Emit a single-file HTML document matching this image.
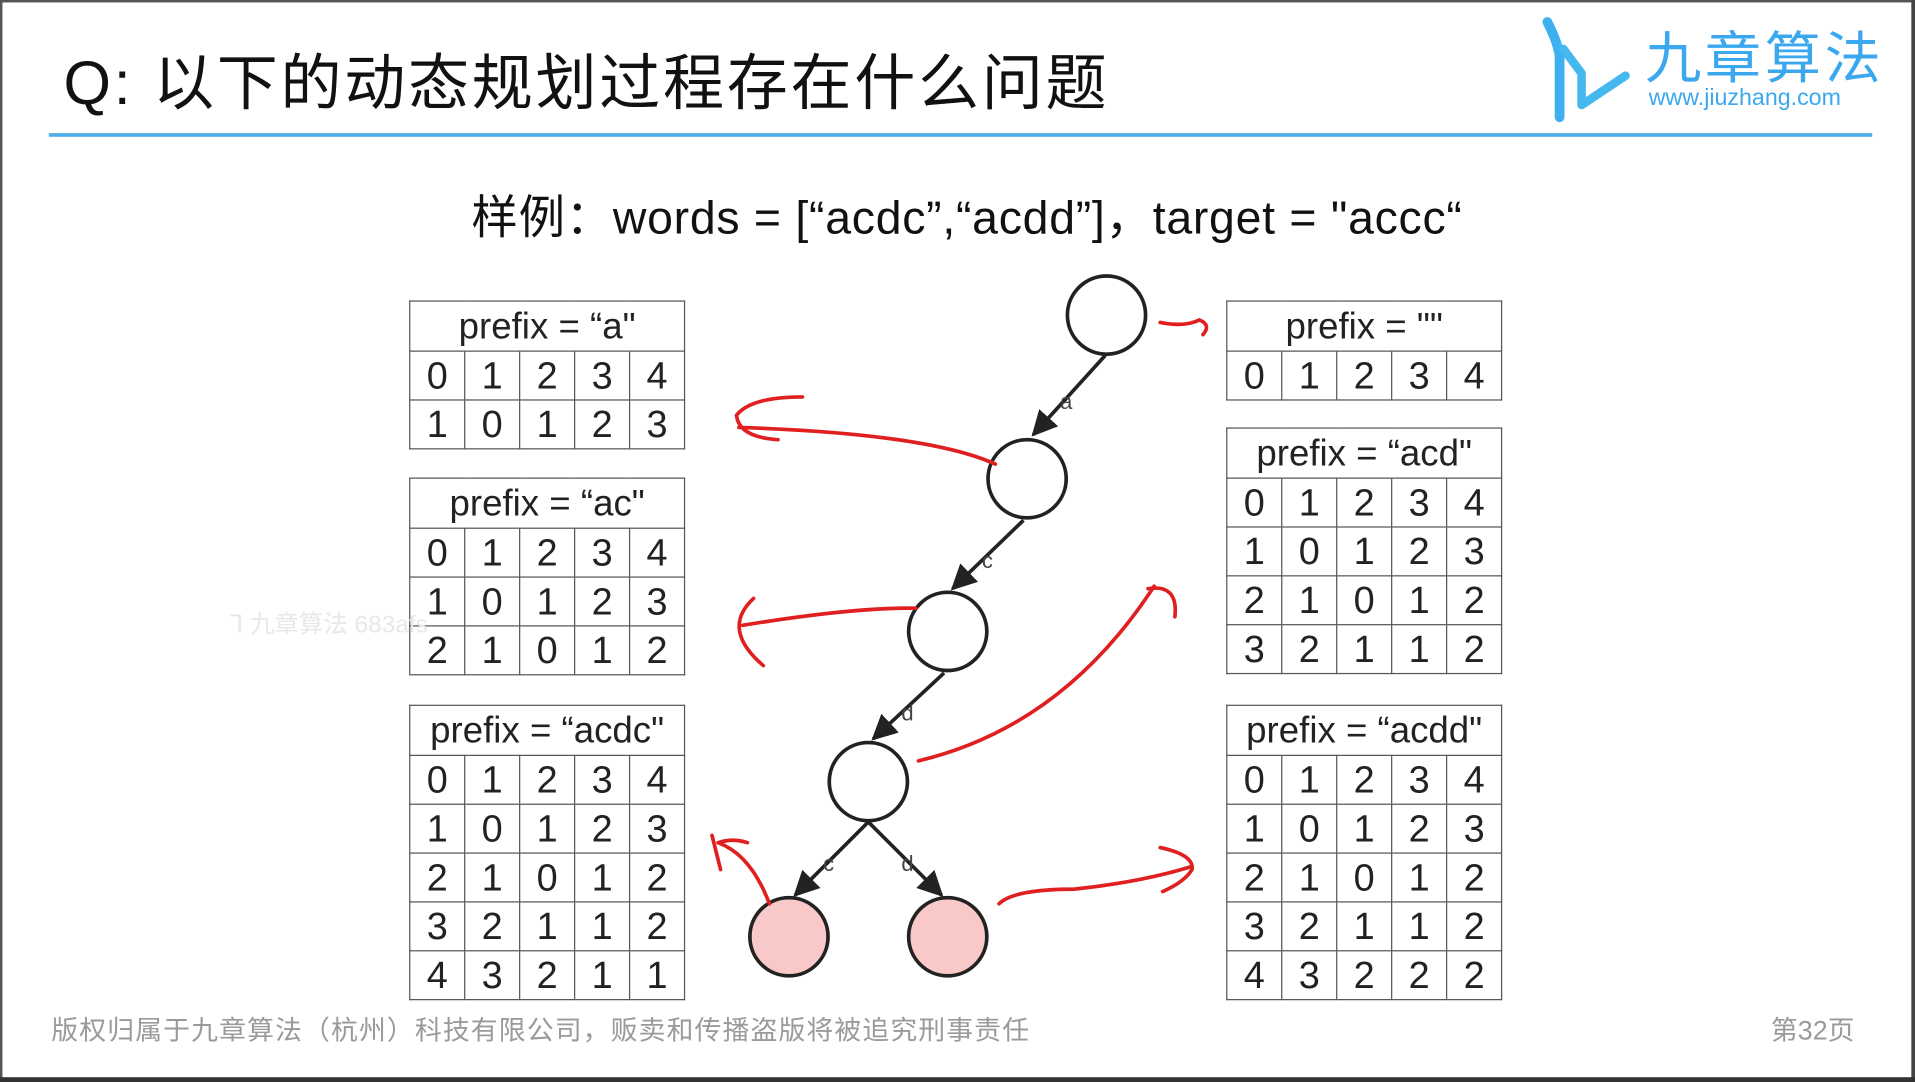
<!DOCTYPE html>
<html><head><meta charset="utf-8"><style>
html,body{margin:0;padding:0;width:1915px;height:1082px;overflow:hidden;background:#fff}
#c{position:absolute;left:0;top:0;width:1568px;height:886px;transform:scale(1.22130);transform-origin:0 0;background:#fff;font-family:"Liberation Sans","Noto Sans CJK SC",sans-serif}
.t{position:absolute;border-collapse:collapse;width:226px;color:#222;font-size:31px;font-family:"Liberation Sans","DejaVu Sans",sans-serif;font-weight:300}
.t td{border:1.5px solid #555;text-align:center;height:39px;padding:0;width:45px;line-height:39px}
.t td.h{height:40px;font-size:30px}
.a{position:absolute;white-space:nowrap}
</style></head><body><div id="c">
<div style="position:absolute;left:0;top:0;width:1568px;height:2px;background:#555"></div>
<div style="position:absolute;left:0;top:0;width:2px;height:886px;background:#555"></div>
<div style="position:absolute;right:0;top:0;width:3px;height:886px;background:#444"></div>
<div style="position:absolute;left:0;top:882px;width:1568px;height:4px;background:#333"></div>
<div class="a" style="left:52px;top:28px;font-size:50px;color:#111;letter-spacing:2.2px">Q: 以下的动态规划过程存在什么问题</div>
<div style="position:absolute;left:40px;top:109px;width:1493px;height:3px;background:#4aaee8"></div>
<svg class="a" style="left:1255px;top:8px" width="100" height="95" viewBox="0 0 100 95"><path d="M12 10 Q22 30 22 40 L22 88" stroke="#3fb0ef" stroke-width="8" fill="none" stroke-linecap="round"/><path d="M25 32 L40 52 L40 78 L76 54" stroke="#45b8f0" stroke-width="7" fill="none" stroke-linecap="round" stroke-linejoin="round"/></svg>
<div class="a" style="left:1347px;top:12px;font-size:46px;color:#3aa7ee;letter-spacing:3px">九章算法</div>
<div class="a" style="left:1350px;top:70px;font-size:19px;color:#3aa7ee">www.jiuzhang.com</div>
<div class="a" style="left:386px;top:147px;font-size:38px;color:#111;letter-spacing:0.6px">样例：words = [“acdc”,“acdd”]，target = "accc“</div>

<table class="t" style="left:335px;top:246px"><tr><td class="h" colspan="5">prefix = “a"</td></tr><tr><td>0</td><td>1</td><td>2</td><td>3</td><td>4</td></tr><tr><td>1</td><td>0</td><td>1</td><td>2</td><td>3</td></tr></table>
<table class="t" style="left:335px;top:391px"><tr><td class="h" colspan="5">prefix = “ac"</td></tr><tr><td>0</td><td>1</td><td>2</td><td>3</td><td>4</td></tr><tr><td>1</td><td>0</td><td>1</td><td>2</td><td>3</td></tr><tr><td>2</td><td>1</td><td>0</td><td>1</td><td>2</td></tr></table>
<table class="t" style="left:335px;top:577px"><tr><td class="h" colspan="5">prefix = “acdc"</td></tr><tr><td>0</td><td>1</td><td>2</td><td>3</td><td>4</td></tr><tr><td>1</td><td>0</td><td>1</td><td>2</td><td>3</td></tr><tr><td>2</td><td>1</td><td>0</td><td>1</td><td>2</td></tr><tr><td>3</td><td>2</td><td>1</td><td>1</td><td>2</td></tr><tr><td>4</td><td>3</td><td>2</td><td>1</td><td>1</td></tr></table>
<table class="t" style="left:1004px;top:246px"><tr><td class="h" colspan="5">prefix = ""</td></tr><tr><td>0</td><td>1</td><td>2</td><td>3</td><td>4</td></tr></table>
<table class="t" style="left:1004px;top:350px"><tr><td class="h" colspan="5">prefix = “acd"</td></tr><tr><td>0</td><td>1</td><td>2</td><td>3</td><td>4</td></tr><tr><td>1</td><td>0</td><td>1</td><td>2</td><td>3</td></tr><tr><td>2</td><td>1</td><td>0</td><td>1</td><td>2</td></tr><tr><td>3</td><td>2</td><td>1</td><td>1</td><td>2</td></tr></table>
<table class="t" style="left:1004px;top:577px"><tr><td class="h" colspan="5">prefix = “acdd"</td></tr><tr><td>0</td><td>1</td><td>2</td><td>3</td><td>4</td></tr><tr><td>1</td><td>0</td><td>1</td><td>2</td><td>3</td></tr><tr><td>2</td><td>1</td><td>0</td><td>1</td><td>2</td></tr><tr><td>3</td><td>2</td><td>1</td><td>1</td><td>2</td></tr><tr><td>4</td><td>3</td><td>2</td><td>2</td><td>2</td></tr></table>

<svg class="a" style="left:0;top:0" width="1568" height="886" viewBox="0 0 1568 886">
<defs><marker id="ar" viewBox="0 0 10 10" refX="9" refY="5" markerWidth="7" markerHeight="7" orient="auto"><path d="M0 0 L10 5 L0 10 z" fill="#222"/></marker></defs>
<g stroke="#222" stroke-width="3" fill="none">
<line x1="905" y1="291" x2="846" y2="356" marker-end="url(#ar)"/>
<line x1="838" y1="426" x2="780" y2="482" marker-end="url(#ar)"/>
<line x1="773" y1="551" x2="715" y2="605" marker-end="url(#ar)"/>
<line x1="711" y1="673" x2="651" y2="733" marker-end="url(#ar)"/>
<line x1="711" y1="673" x2="771" y2="733" marker-end="url(#ar)"/>
<circle cx="906" cy="258" r="32" fill="#fff"/>
<circle cx="841" cy="392" r="32" fill="#fff"/>
<circle cx="776" cy="517" r="32" fill="#fff"/>
<circle cx="711" cy="640" r="32" fill="#fff"/>
<circle cx="646" cy="767" r="32" fill="#f9c9c9"/>
<circle cx="776" cy="767" r="32" fill="#f9c9c9"/>
</g>
<g font-family="Liberation Sans,sans-serif" font-size="18" fill="#444">
<text x="868" y="335">a</text><text x="804" y="465">c</text><text x="738" y="590">d</text><text x="674" y="713">c</text><text x="738" y="713">d</text></g>
<g stroke="#e02020" stroke-width="3" fill="none" stroke-linecap="round">
<path d="M950 264 Q970 268 982 262 Q992 266 985 274"/>
<path d="M815 380 Q760 355 605 350"/>
<path d="M657 325 Q615 325 603 340 Q605 358 637 360"/>
<path d="M750 498 Q700 497 608 512"/>
<path d="M617 490 Q590 515 625 545"/>
<path d="M752 623 Q870 595 945 480"/>
<path d="M940 482 Q965 478 962 505"/>
<path d="M630 740 Q615 700 588 690"/>
<path d="M583 684 L590 712 M588 690 Q600 686 612 690"/>
<path d="M818 740 Q830 728 880 728 Q935 722 974 710"/>
<path d="M950 694 Q978 700 976 712 Q970 722 952 730"/>
</g>
</svg>

<div class="a" style="left:188px;top:495px;font-size:20px;color:#e8e8e8">⅂ 九章算法 683afs</div>
<div class="a" style="left:42px;top:826px;font-size:22px;color:#9a9a9a;letter-spacing:0.9px">版权归属于九章算法（杭州）科技有限公司，贩卖和传播盗版将被追究刑事责任</div>
<div class="a" style="left:1450px;top:826px;font-size:22px;color:#9a9a9a">第32页</div>
</div></body></html>
